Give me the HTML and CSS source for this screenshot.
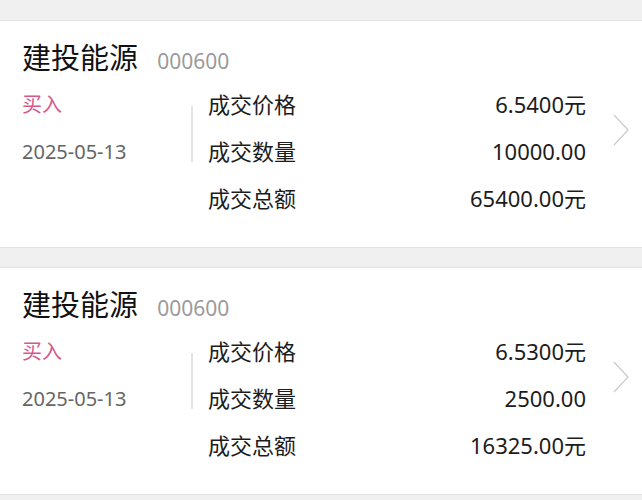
FILE: index.html
```html
<!DOCTYPE html>
<html lang="zh-CN">
<head>
  <meta charset="UTF-8">
  <meta name="viewport" content="width=device-width, initial-scale=1.0">
  <title>成交明细</title>
  <link rel="stylesheet" href="styles.css">
</head>

<body>
  <div class="list">
    <!-- 成交记录 1 -->
    <div class="card">
      <div class="main">
        <div class="title">
          <span class="name">建投能源</span>
          <span class="code">000600</span>
        </div>
        <div class="detail">
          <div class="side">
            <div class="dir">买入</div>
            <div class="date">2025-05-13</div>
          </div>
          <div class="divider"></div>
          <div class="rows">
            <div class="row"><span>成交价格</span><span>6.5400元</span></div>
            <div class="row"><span>成交数量</span><span>10000.00</span></div>
            <div class="row"><span>成交总额</span><span>65400.00元</span></div>
          </div>
        </div>
      </div>
      <svg class="arrow" width="18" height="32" viewBox="0 0 18 32">
        <polyline points="2,1 16,16 2,31" fill="none" stroke="#cccccc" stroke-width="1.3"/>
      </svg>
    </div>

    <!-- 成交记录 2 -->
    <div class="card">
      <div class="main">
        <div class="title">
          <span class="name">建投能源</span>
          <span class="code">000600</span>
        </div>
        <div class="detail">
          <div class="side">
            <div class="dir">买入</div>
            <div class="date">2025-05-13</div>
          </div>
          <div class="divider"></div>
          <div class="rows">
            <div class="row"><span>成交价格</span><span>6.5300元</span></div>
            <div class="row"><span>成交数量</span><span>2500.00</span></div>
            <div class="row"><span>成交总额</span><span>16325.00元</span></div>
          </div>
        </div>
      </div>
      <svg class="arrow" width="18" height="32" viewBox="0 0 18 32">
        <polyline points="2,1 16,16 2,31" fill="none" stroke="#cccccc" stroke-width="1.3"/>
      </svg>
    </div>
  </div>
</body>
</html>
```

FILE: styles.css
```css
body {
  margin: 0;
  padding-top: 20px;
  background-color: #f0f0f0;
  font-family: "Noto Sans", "Noto Sans CJK SC", sans-serif;
  color: #1c1c1c;
}
.card {
  display: flex;
  align-items: center;
  background: white;
  border-top: 1px solid #e2e2e2;
  border-bottom: 1px solid #e2e2e2;
  margin-bottom: 19px;
  padding: 14px 12px 25px 22px;
}
.main {
  flex: 1;
}
.title {
  height: 46px;
  line-height: 46px;
}
.name {
  font-size: 29px;
  color: #111;
}
.code {
  font-size: 21px;
  color: #9a9a9a;
  margin-left: 15px;
}
.detail {
  display: flex;
}
.side {
  width: 169px;
  font-size: 20px;
  line-height: 47px;
}
.dir {
  color: #d45a8c;
}
.date {
  color: #666;
}
.divider {
  width: 2px;
  height: 56px;
  margin-top: 25px;
  background-color: #e4e4e4;
}
.rows {
  flex: 1;
  padding-left: 15px;
  font-size: 22px;
  line-height: 47px;
}
.row {
  display: flex;
  justify-content: space-between;
}
.arrow {
  margin-left: 26px;
  margin-top: 3px;
}
```
